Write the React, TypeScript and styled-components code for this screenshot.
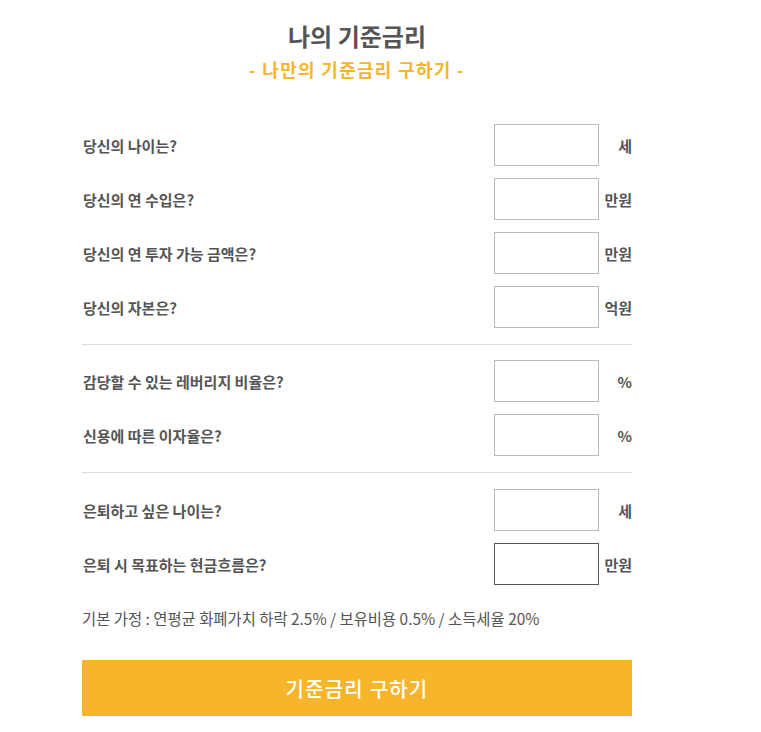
import React from "react";
import styled, { createGlobalStyle } from "styled-components";

const Global = createGlobalStyle`
  html, body { margin: 0; padding: 0; background: #fff; }
  body { font-family: "Noto Sans CJK KR", "Noto Sans", sans-serif; color: #555; }
`;

const Page = styled.div`
  width: 550px;
  margin-left: 82px;
  padding-top: 19px;
`;

const Header = styled.header`
  display: flex;
  flex-direction: column;
  align-items: center;
`;

const Title = styled.h1`
  margin: 0;
  font-size: 24px;
  font-weight: 700;
  line-height: 34px;
  color: #555;
`;

const Subtitle = styled.h2`
  margin: 0;
  font-size: 18px;
  font-weight: 700;
  letter-spacing: 1.3px;
  line-height: 32px;
  color: #f7b52b;
`;

const Section = styled.div<{ $top: number; $bottom?: boolean }>`
  display: flex;
  flex-direction: column;
  gap: 12px;
  padding-top: ${(p) => p.$top}px;
  padding-bottom: 16px;
  border-bottom: ${(p) => (p.$bottom ? "1px solid #ddd" : "none")};
`;

const Row = styled.div`
  display: flex;
  align-items: center;
  height: 42px;
`;

const Label = styled.label`
  flex: 1;
  font-size: 15px;
  font-weight: 700;
  color: #555;
  padding-left: 1px;
`;

const Input = styled.input<{ $active?: boolean }>`
  box-sizing: border-box;
  width: 105px;
  height: 42px;
  border: 1px solid ${(p) => (p.$active ? "#555" : "#bbb")};
  outline: none;
  background: #fff;
  margin: 0;
  padding: 0 6px;
`;

const Unit = styled.span`
  width: 33px;
  text-align: right;
  font-size: 15px;
  font-weight: 700;
  color: #555;
`;

const Note = styled.p`
  margin: 0;
  padding-top: 1px;
  font-size: 15.4px;
  line-height: 32px;
  color: #555;
`;

const Button = styled.button`
  display: block;
  width: 100%;
  height: 56px;
  margin-top: 26px;
  border: none;
  background: #f7b52b;
  color: #fff;
  font-family: "Noto Sans CJK KR", "Noto Sans", sans-serif;
  font-size: 20px;
  font-weight: 500;
  letter-spacing: 1.2px;
  cursor: pointer;
`;

type Item = { label: string; unit: string; active?: boolean };

const groups: Item[][] = [
  [
    { label: "당신의 나이는?", unit: "세" },
    { label: "당신의 연 수입은?", unit: "만원" },
    { label: "당신의 연 투자 가능 금액은?", unit: "만원" },
    { label: "당신의 자본은?", unit: "억원" },
  ],
  [
    { label: "감당할 수 있는 레버리지 비율은?", unit: "%" },
    { label: "신용에 따른 이자율은?", unit: "%" },
  ],
  [
    { label: "은퇴하고 싶은 나이는?", unit: "세" },
    { label: "은퇴 시 목표하는 현금흐름은?", unit: "만원", active: true },
  ],
];

const sectionTop = [39, 15, 16];

export default function App() {
  return (
    <>
      <Global />
      <Page>
        <Header>
          <Title>나의 기준금리</Title>
          <Subtitle>- 나만의 기준금리 구하기 -</Subtitle>
        </Header>
        {groups.map((g, gi) => (
          <Section key={gi} $top={sectionTop[gi]} $bottom={gi < groups.length - 1}>
            {g.map((it) => (
              <Row key={it.label}>
                <Label>{it.label}</Label>
                <Input $active={it.active} />
                <Unit>{it.unit}</Unit>
              </Row>
            ))}
          </Section>
        ))}
        <Note>기본 가정 : 연평균 화폐가치 하락 2.5% / 보유비용 0.5% / 소득세율 20%</Note>
        <Button>기준금리 구하기</Button>
      </Page>
    </>
  );
}
